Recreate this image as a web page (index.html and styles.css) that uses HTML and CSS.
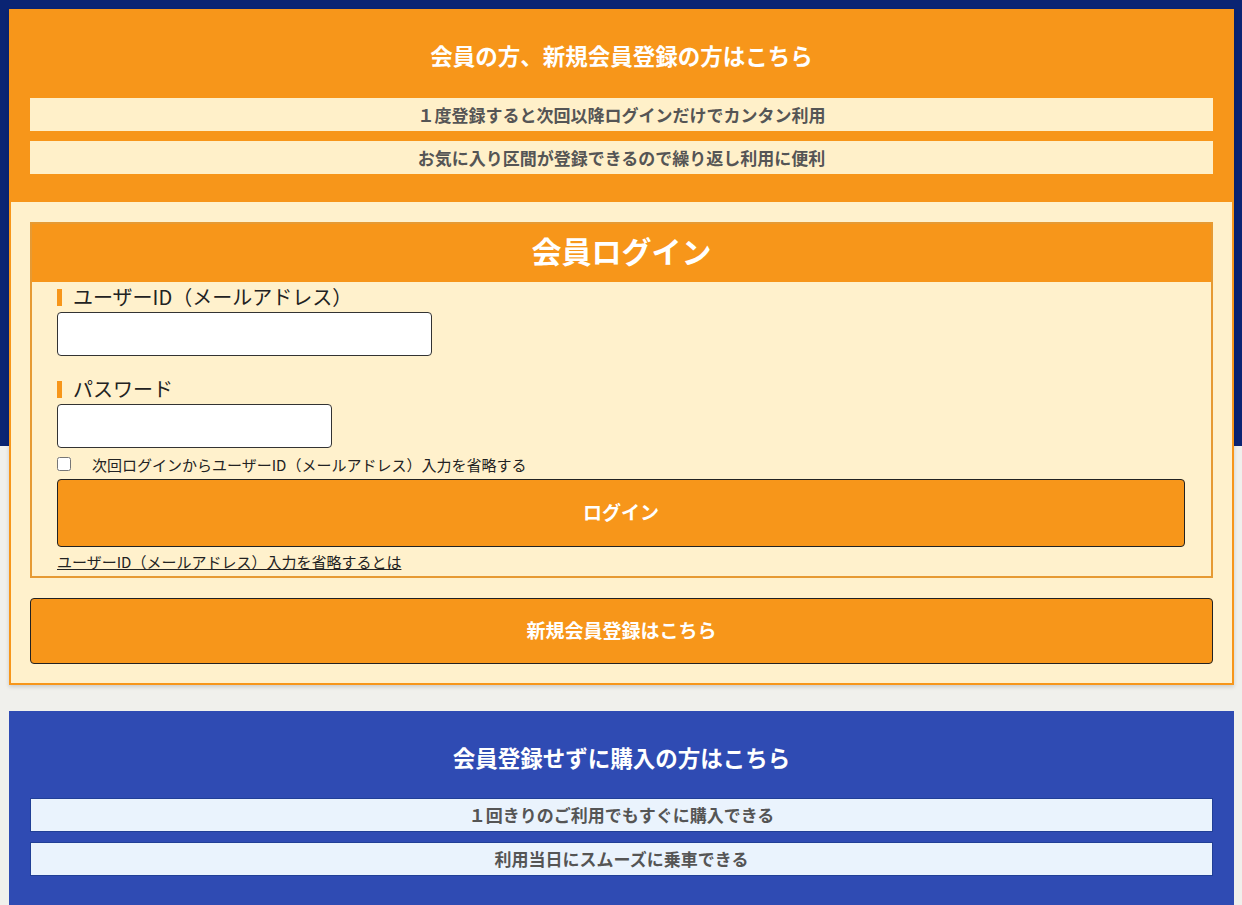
FILE: index.html
```html
<!DOCTYPE html>
<html lang="ja">
<head>
<meta charset="utf-8">
<title>会員ログイン</title>
<link rel="stylesheet" href="styles.css">
</head>
<body>
<div class="page">
  <section class="card card-member">
    <div class="card-head">
      <h2 class="card-title">会員の方、新規会員登録の方はこちら</h2>
      <ul class="features">
        <li class="feature">１度登録すると次回以降ログインだけでカンタン利用</li>
        <li class="feature">お気に入り区間が登録できるので繰り返し利用に便利</li>
      </ul>
    </div>
    <div class="card-body">
      <div class="login-box">
        <h3 class="login-title">会員ログイン</h3>
        <div class="login-content">
          <label class="field-label" for="uid">ユーザーID（メールアドレス）</label>
          <input class="text-input input-id" id="uid" type="text">
          <label class="field-label field-label-2" for="pw">パスワード</label>
          <input class="text-input input-pw" id="pw" type="password">
          <div class="check-row">
            <input class="check" type="checkbox" id="skip">
            <label for="skip">次回ログインからユーザーID（メールアドレス）入力を省略する</label>
          </div>
          <button class="btn btn-login" type="button">ログイン</button>
          <div class="link-row"><a class="help-link" href="#">ユーザーID（メールアドレス）入力を省略するとは</a></div>
        </div>
      </div>
      <button class="btn btn-register" type="button">新規会員登録はこちら</button>
    </div>
  </section>

  <section class="card card-guest">
    <h2 class="card-title card-title-guest">会員登録せずに購入の方はこちら</h2>
    <ul class="features features-blue">
      <li class="feature feature-blue">１回きりのご利用でもすぐに購入できる</li>
      <li class="feature feature-blue">利用当日にスムーズに乗車できる</li>
    </ul>
  </section>
</div>
</body>
</html>
```

FILE: styles.css
```css
* { box-sizing: border-box; }

html, body {
  margin: 0;
  padding: 0;
}

body {
  font-family: "Noto Sans CJK JP", "Noto Sans", sans-serif;
  color: #222;
  background: linear-gradient(to bottom, #0a2473 0, #0a2473 446px, #f0f0ec 446px);
  min-height: 905px;
}

.page {
  padding: 9px 8px 0 9px;
}

.card {
  width: 1225px;
}

.card-member {
  border: 2px solid #f7961a;
  background: #fff1cc;
  box-shadow: 0 2px 4px rgba(0, 0, 0, 0.15);
}

.card-head {
  background: #f7961a;
  padding: 28px 19px 28px;
}

.card-title {
  margin: 0 0 26px;
  font-size: 22.5px;
  line-height: 33px;
  font-weight: bold;
  color: #fff;
  text-align: center;
}

.features {
  list-style: none;
  margin: 0;
  padding: 0;
  display: flex;
  flex-direction: column;
  gap: 10px;
}

.feature {
  height: 33px;
  line-height: 33px;
  background: #fff0c9;
  color: #555;
  font-size: 17px;
  font-weight: bold;
  text-align: center;
}

.card-body {
  padding: 20px 19px 19px;
}

.login-box {
  border: 2px solid #e69a33;
}

.login-title {
  margin: 0;
  height: 58px;
  line-height: 53px;
  background: #f7961a;
  color: #fff;
  font-size: 30px;
  font-weight: bold;
  text-align: center;
}

.login-content {
  padding: 0 26px 2px 25px;
  display: flex;
  flex-direction: column;
  align-items: flex-start;
}

.field-label {
  display: flex;
  align-items: center;
  height: 30px;
  padding-bottom: 2px;
  font-size: 20px;
  color: #222;
}

.field-label::before {
  content: "";
  display: inline-block;
  width: 5px;
  height: 17px;
  margin-top: 2px;
  background: #f7961a;
  margin-right: 11px;
}

.field-label-2 {
  margin-top: 18px;
}

.text-input {
  height: 44px;
  border: 1px solid #333;
  border-radius: 4px;
  background: #fff;
  font-size: 16px;
  padding: 0 8px;
}

.input-id { width: 375px; }
.input-pw { width: 275px; }

.check-row {
  margin-top: 5px;
  height: 22px;
  display: flex;
  align-items: center;
  font-size: 15px;
  color: #222;
}

.check {
  width: 14px;
  height: 14px;
  margin: 0 21px 0 0;
}

.btn {
  display: block;
  width: 100%;
  background: #f7961a;
  border: 1px solid #222;
  border-radius: 4px;
  color: #fff;
  font-family: "Noto Sans CJK JP", "Noto Sans", sans-serif;
  font-size: 19px;
  font-weight: bold;
  padding: 0 0 3px;
  cursor: pointer;
}

.btn-login {
  margin-top: 4px;
  height: 68px;
}

.link-row {
  margin-top: 5px;
  height: 22px;
  line-height: 20px;
  font-size: 15px;
}

.help-link {
  color: #222;
  text-decoration: underline;
}

.btn-register {
  margin-top: 20px;
  height: 66px;
}

.card-guest {
  margin-top: 26px;
  background: #2f4bb3;
  padding: 30px 21px 30px;
}

.card-title-guest {
  margin-bottom: 24px;
}

.features-blue {
  gap: 10px;
}

.feature-blue {
  height: 34px;
  line-height: 31px;
  background: #eaf3fd;
  border: 1px solid #203f96;
}
```
